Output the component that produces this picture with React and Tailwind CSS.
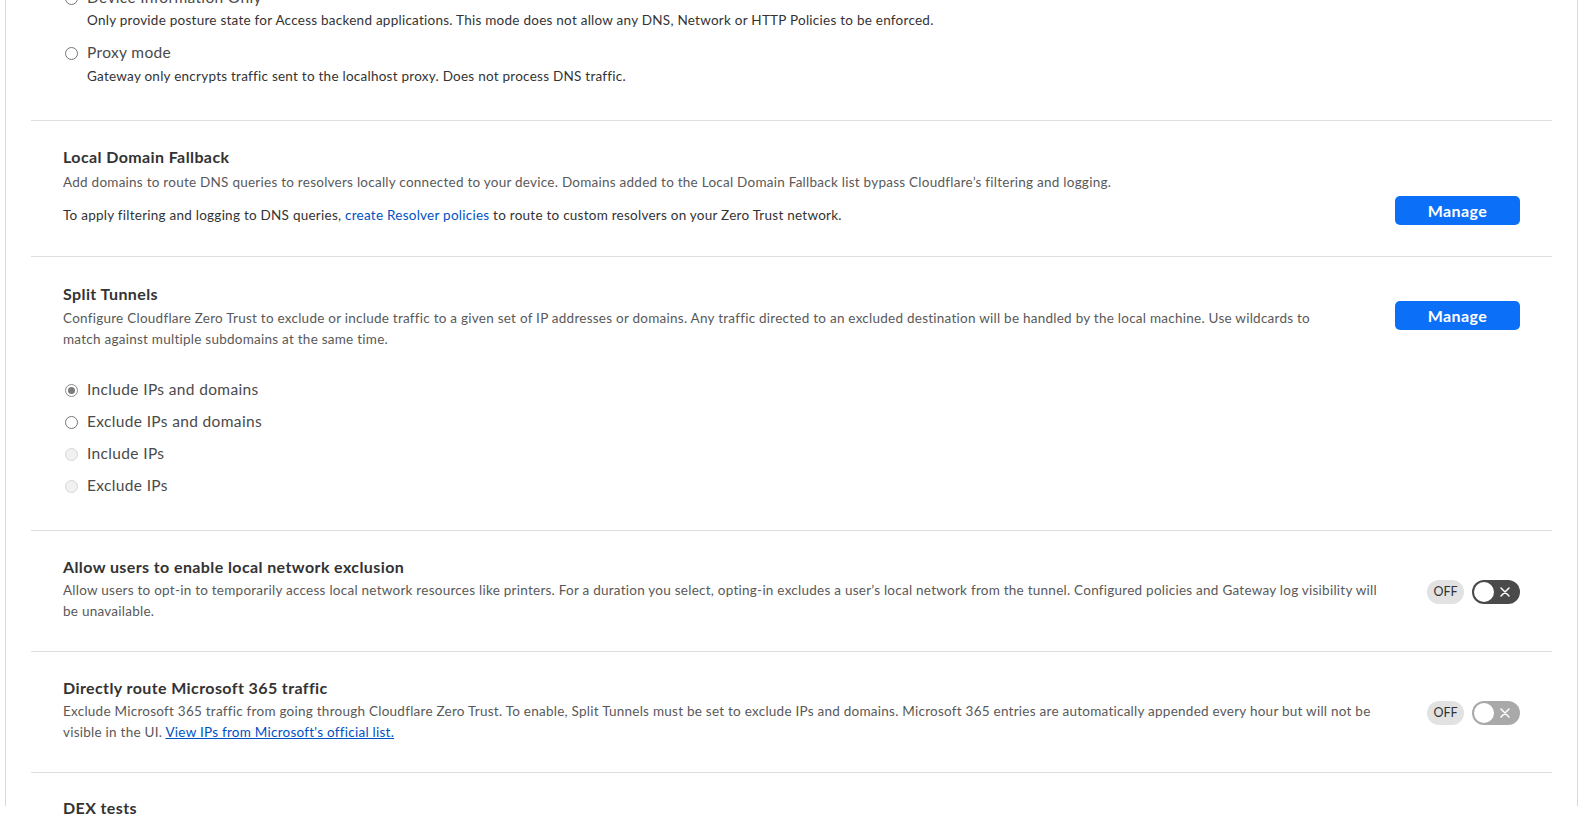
import React from 'react'

function Radio({ label, checked, disabled }) {
  let circle = 'border-[#767676] bg-white'
  if (checked) circle = 'border-[#8a8a8a] bg-white'
  if (disabled) circle = 'border-[#d6d6d6] bg-[#f1f1f1]'
  return (
    <div className="flex items-center h-[32px]">
      <span className={`w-[13px] h-[13px] rounded-full border flex items-center justify-center ml-[2px] ${circle}`}>
        {checked && <span className="w-[7px] h-[7px] rounded-full bg-[#7b7b7b]" />}
      </span>
      <span className="ml-[9px] text-[15.5px] tracking-[0.35px] text-[#4a4a4a]">{label}</span>
    </div>
  )
}

function ManageButton() {
  return (
    <button className="w-[125px] h-[29px] rounded-[5px] bg-[#0b6ff7] text-white text-[16px] tracking-[0.4px] font-bold">
      Manage
    </button>
  )
}

function Toggle({ disabled }) {
  return (
    <div className="flex items-center gap-[8px]">
      <span className="w-[37px] h-[24px] rounded-full bg-[#e2e2e2] text-[12.5px] text-[#333] flex items-center justify-center">
        OFF
      </span>
      <span className={`w-[48px] h-[24px] rounded-full flex items-center justify-between pl-[2px] pr-[10px] ${disabled ? 'bg-[#a9a9a9]' : 'bg-[#4a4a4a]'}`}>
        <span className="w-[20px] h-[20px] rounded-full bg-white" />
        <svg width="10" height="10" viewBox="0 0 10 10">
          <path d="M1 1 L9 9 M9 1 L1 9" stroke="white" strokeWidth="1.5" strokeLinecap="round" />
        </svg>
      </span>
    </div>
  )
}

const heading = 'text-[16px] tracking-[0.4px] leading-[22px] font-bold text-[#333]'
const desc = 'text-[13.5px] tracking-[0.25px] leading-[21px] text-[#595959]'
const body = 'text-[13.5px] tracking-[0.25px] leading-[20px] text-[#333]'

export default function App() {
  return (
    <div className="h-[820px] overflow-hidden bg-white font-['Lato',sans-serif]">
      <div className="ml-[5px] w-[1573px] h-full border-x border-[#d9d9d9]">
        <div className="px-[25px]">
          {/* device mode options (scrolled) */}
          <div className="pl-[32px] -mt-[14px] pb-[34px] border-b border-[#dedede]">
            <div className="flex items-center h-[24px]">
              <span className="w-[13px] h-[13px] rounded-full border border-[#767676] ml-[2px]" />
              <span className="ml-[9px] text-[15.5px] tracking-[0.35px] text-[#4a4a4a]">Device Information Only</span>
            </div>
            <p className={`ml-[24px] ${body}`}>
              Only provide posture state for Access backend applications. This mode does not allow any DNS, Network or HTTP Policies to be enforced.
            </p>
            <div className="flex items-center h-[24px] mt-[11px]">
              <span className="w-[13px] h-[13px] rounded-full border border-[#767676] ml-[2px]" />
              <span className="ml-[9px] text-[15.5px] tracking-[0.35px] text-[#4a4a4a]">Proxy mode</span>
            </div>
            <p className={`ml-[24px] mt-[1px] ${body}`}>
              Gateway only encrypts traffic sent to the localhost proxy. Does not process DNS traffic.
            </p>
          </div>

          {/* Local Domain Fallback */}
          <div className="flex pl-[32px] pr-[32px] pt-[25px] pb-[31px] border-b border-[#dedede]">
            <div className="flex-1">
              <h3 className={heading}>Local Domain Fallback</h3>
              <p className={`${desc} mt-[4px] leading-[20px]`}>
                Add domains to route DNS queries to resolvers locally connected to your device. Domains added to the Local Domain Fallback list bypass Cloudflare’s filtering and logging.
              </p>
              <p className={`mt-[12px] ${body}`}>
                To apply filtering and logging to DNS queries,{' '}
                <a className="text-[#0051c3]">create Resolver policies</a> to route to custom resolvers on your Zero Trust network.
              </p>
            </div>
            <div className="pt-[50px]">
              <ManageButton />
            </div>
          </div>

          {/* Split Tunnels */}
          <div className="flex pl-[32px] pr-[32px] pt-[26px] pb-[28px] border-b border-[#dedede]">
            <div className="flex-1">
              <h3 className={heading}>Split Tunnels</h3>
              <p className={`${desc} mt-[3px]`}>
                Configure Cloudflare Zero Trust to exclude or include traffic to a given set of IP addresses or domains. Any traffic directed to an excluded destination will be handled by the local machine. Use wildcards to<br />
                match against multiple subdomains at the same time.
              </p>
              <div className="mt-[24px]">
                <Radio label="Include IPs and domains" checked />
                <Radio label="Exclude IPs and domains" />
                <Radio label="Include IPs" disabled />
                <Radio label="Exclude IPs" disabled />
              </div>
            </div>
            <div className="pt-[18px]">
              <ManageButton />
            </div>
          </div>

          {/* Local network exclusion */}
          <div className="flex pl-[32px] pr-[32px] pt-[25px] pb-[29px] border-b border-[#dedede]">
            <div className="flex-1">
              <h3 className={heading}>Allow users to enable local network exclusion</h3>
              <p className={`${desc} mt-[2px]`}>
                Allow users to opt-in to temporarily access local network resources like printers. For a duration you select, opting-in excludes a user’s local network from the tunnel. Configured policies and Gateway log visibility will<br />
                be unavailable.
              </p>
            </div>
            <div className="pt-[24px] pl-[30px]">
              <Toggle />
            </div>
          </div>

          {/* Microsoft 365 */}
          <div className="flex pl-[32px] pr-[32px] pt-[25px] pb-[29px] border-b border-[#dedede]">
            <div className="flex-1">
              <h3 className={heading}>Directly route Microsoft 365 traffic</h3>
              <p className={`${desc} mt-[2px]`}>
                Exclude Microsoft 365 traffic from going through Cloudflare Zero Trust. To enable, Split Tunnels must be set to exclude IPs and domains. Microsoft 365 entries are automatically appended every hour but will not be<br />
                visible in the UI. <a className="text-[#0051c3] underline">View IPs from Microsoft's official list.</a>
              </p>
            </div>
            <div className="pt-[24px] pl-[30px]">
              <Toggle disabled />
            </div>
          </div>

          {/* DEX tests */}
          <div className="pl-[32px] pt-[24px]">
            <h3 className={heading}>DEX tests</h3>
          </div>
        </div>
      </div>
    </div>
  )
}
